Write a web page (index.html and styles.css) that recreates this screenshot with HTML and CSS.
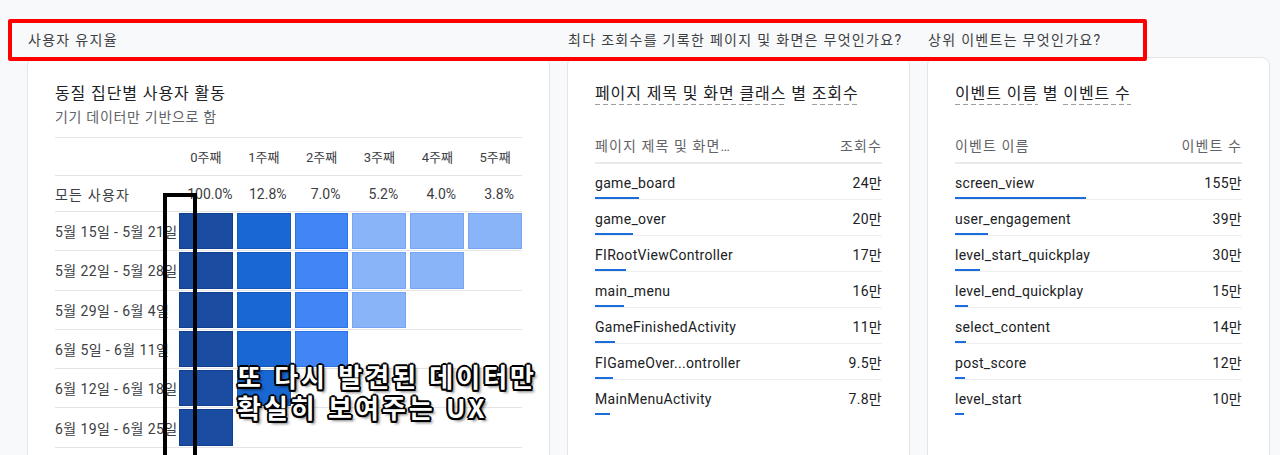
FILE: index.html
```html
<!DOCTYPE html>
<html lang="ko">
<head>
<meta charset="utf-8">
<title>Analytics</title>
<link rel="stylesheet" href="styles.css">
</head>
<body>
<div class="board">
  <div class="qhead">사용자 유지율</div>
  <div class="qhead">최다 조회수를 기록한 페이지 및 화면은 무엇인가요?</div>
  <div class="qhead">상위 이벤트는 무엇인가요?</div>

  <section class="card">
    <h2 class="title">동질 집단별 사용자 활동</h2>
    <p class="subtitle">기기 데이터만 기반으로 함</p>
    <div class="cohort">
      <div class="crow chead">
        <span></span><span>0주째</span><span>1주째</span><span>2주째</span><span>3주째</span><span>4주째</span><span>5주째</span>
      </div>
      <div class="crow call">
        <span class="lbl">모든 사용자</span><span>100.0%</span><span>12.8%</span><span>7.0%</span><span>5.2%</span><span>4.0%</span><span>3.8%</span>
      </div>
      <div class="crow cdata">
        <span class="lbl">5월 15일 - 5월 21일</span><i class="c c0"></i><i class="c c1"></i><i class="c c2"></i><i class="c c3"></i><i class="c c3"></i><i class="c c3"></i>
      </div>
      <div class="crow cdata">
        <span class="lbl">5월 22일 - 5월 28일</span><i class="c c0"></i><i class="c c1"></i><i class="c c2"></i><i class="c c3"></i><i class="c c3"></i>
      </div>
      <div class="crow cdata">
        <span class="lbl">5월 29일 - 6월 4일</span><i class="c c0"></i><i class="c c1"></i><i class="c c2"></i><i class="c c3"></i>
      </div>
      <div class="crow cdata">
        <span class="lbl">6월 5일 - 6월 11일</span><i class="c c0"></i><i class="c c1"></i><i class="c c2"></i>
      </div>
      <div class="crow cdata">
        <span class="lbl">6월 12일 - 6월 18일</span><i class="c c0"></i><i class="c c1"></i>
      </div>
      <div class="crow cdata">
        <span class="lbl">6월 19일 - 6월 25일</span><i class="c c0"></i>
      </div>
    </div>
  </section>

  <section class="card">
    <h2 class="title"><span class="dash">페이지 제목 및 화면 클래스</span> 별 <span class="dash">조회수</span></h2>
    <div class="list">
      <div class="lhead"><span>페이지 제목 및 화면…</span><span>조회수</span></div>
      <div class="lrow"><div class="lline"><span>game_board</span><span>24만</span></div><div class="bar" style="width:44px"></div></div>
      <div class="lrow"><div class="lline"><span>game_over</span><span>20만</span></div><div class="bar" style="width:38px"></div></div>
      <div class="lrow"><div class="lline"><span>FIRootViewController</span><span>17만</span></div><div class="bar" style="width:31px"></div></div>
      <div class="lrow"><div class="lline"><span>main_menu</span><span>16만</span></div><div class="bar" style="width:29px"></div></div>
      <div class="lrow"><div class="lline"><span>GameFinishedActivity</span><span>11만</span></div><div class="bar" style="width:20px"></div></div>
      <div class="lrow"><div class="lline"><span>FIGameOver...ontroller</span><span>9.5만</span></div><div class="bar" style="width:18px"></div></div>
      <div class="lrow last"><div class="lline"><span>MainMenuActivity</span><span>7.8만</span></div><div class="bar" style="width:15px"></div></div>
    </div>
  </section>

  <section class="card">
    <h2 class="title"><span class="dash">이벤트 이름</span> 별 <span class="dash">이벤트 수</span></h2>
    <div class="list">
      <div class="lhead"><span>이벤트 이름</span><span>이벤트 수</span></div>
      <div class="lrow"><div class="lline"><span>screen_view</span><span>155만</span></div><div class="bar" style="width:131px"></div></div>
      <div class="lrow"><div class="lline"><span>user_engagement</span><span>39만</span></div><div class="bar" style="width:33px"></div></div>
      <div class="lrow"><div class="lline"><span>level_start_quickplay</span><span>30만</span></div><div class="bar" style="width:25px"></div></div>
      <div class="lrow"><div class="lline"><span>level_end_quickplay</span><span>15만</span></div><div class="bar" style="width:13px"></div></div>
      <div class="lrow"><div class="lline"><span>select_content</span><span>14만</span></div><div class="bar" style="width:11px"></div></div>
      <div class="lrow"><div class="lline"><span>post_score</span><span>12만</span></div><div class="bar" style="width:10px"></div></div>
      <div class="lrow last"><div class="lline"><span>level_start</span><span>10만</span></div><div class="bar" style="width:9px"></div></div>
    </div>
  </section>
</div>

<div class="mark-red"></div>
<div class="mark-col"></div>
<div class="mark-text">또 다시 발견된 데이터만<br>확실히 보여주는 UX</div>
</body>
</html>
```

FILE: styles.css
```css
html, body {
  margin: 0;
  padding: 0;
  height: 455px;
  overflow: hidden;
}

body {
  background: #f8f9fa;
  font-family: Roboto, "Noto Sans CJK KR", "Noto Sans", sans-serif;
  color: #202124;
  position: relative;
}

.board {
  display: grid;
  grid-template-columns: 523px 343px 343px;
  grid-template-rows: 57px 430px;
  column-gap: 17px;
  padding: 0 10px 0 27px;
}

.qhead {
  padding: 31px 0 0 1px;
  font-size: 14px;
  line-height: 18px;
  letter-spacing: 1.3px;
  color: #3c4043;
  white-space: nowrap;
}

.card {
  background: #fff;
  border: 1px solid #e3e5e8;
  border-radius: 8px;
  padding: 26px 27px 0;
  box-sizing: border-box;
}

.title {
  margin: 0;
  font-size: 16px;
  font-weight: 400;
  line-height: 20px;
  letter-spacing: 0.9px;
  color: #202124;
  white-space: nowrap;
}

.subtitle {
  margin: 4px 0 0;
  font-size: 14px;
  line-height: 18px;
  letter-spacing: 0.7px;
  color: #5f6368;
}

.dash {
  display: inline-block;
  padding-bottom: 1px;
  background-image: linear-gradient(to right, #9aa0a6 0 5px, transparent 5px 8px);
  background-size: 8px 1px;
  background-repeat: repeat-x;
  background-position: left bottom;
}

/* cohort table */
.cohort {
  margin-top: 11px;
  border-top: 1px solid #e3e4e6;
}

.crow {
  display: grid;
  grid-template-columns: 120px repeat(6, 1fr);
  column-gap: 4px;
  border-bottom: 1px solid #e3e4e6;
  align-items: center;
  font-size: 14px;
}

.crow > span {
  text-align: center;
  white-space: nowrap;
}

.crow > .lbl {
  text-align: left;
  color: #3c4043;
  letter-spacing: 0.4px;
}

.call > .lbl {
  letter-spacing: 1.2px;
}

.chead {
  height: 37px;
  font-size: 13px;
  color: #3c4043;
}

.call {
  height: 35px;
  color: #3c4043;
}

.call > span:not(.lbl) {
  padding-left: 8px;
}

.cdata {
  height: 39.3px;
  box-sizing: border-box;
  padding: 1px 0;
  align-items: stretch;
}

.cdata > .lbl {
  align-self: center;
}

.c {
  display: block;
  position: relative;
  z-index: 1;
  box-sizing: border-box;
  border: 1px solid;
}

.c0 { background: #1a4da2; border-color: #103f8e; }
.c1 { background: #1967d2; border-color: #1558b8; }
.c2 { background: #4285f4; border-color: #2c73e8; }
.c3 { background: #8ab4f8; border-color: #78a5f1; }

/* lists */
.list {
  margin-top: 32px;
}

.lhead {
  display: flex;
  justify-content: space-between;
  font-size: 14px;
  line-height: 18px;
  padding-bottom: 7px;
  border-bottom: 2px solid #e8eaed;
  color: #5f6368;
  letter-spacing: 1.1px;
}

.lrow {
  padding-top: 10px;
  border-bottom: 1px solid #eceef0;
}

.lrow.last {
  border-bottom-color: transparent;
}

.lline {
  display: flex;
  justify-content: space-between;
  font-size: 14px;
  line-height: 18px;
  letter-spacing: 0.3px;
  color: #202124;
  white-space: nowrap;
}

.bar {
  height: 2px;
  margin-top: 5px;
  background: #1a6ddb;
}

/* annotation overlays */
.mark-red {
  position: absolute;
  left: 8px;
  top: 19px;
  width: 1139px;
  height: 42px;
  box-sizing: border-box;
  border: 4px solid #ff0000;
  border-radius: 2px;
  z-index: 5;
}

.mark-col {
  position: absolute;
  left: 163px;
  top: 193px;
  width: 34px;
  height: 290px;
  box-sizing: border-box;
  border: 4px solid #000;
  z-index: 5;
}

.mark-text {
  position: absolute;
  left: 237px;
  top: 360px;
  font-family: "Noto Sans CJK KR", "Liberation Sans", sans-serif;
  font-weight: 700;
  font-size: 26px;
  line-height: 31px;
  letter-spacing: 3px;
  color: #fff;
  white-space: nowrap;
  z-index: 6;
  text-shadow:
    -2px 0 #000, 2px 0 #000, 0 -2px #000, 0 2px #000,
    -1.5px -1.5px #000, 1.5px -1.5px #000, -1.5px 1.5px #000, 1.5px 1.5px #000,
    3px 3px 3px rgba(0, 0, 0, 0.55);
}
```
